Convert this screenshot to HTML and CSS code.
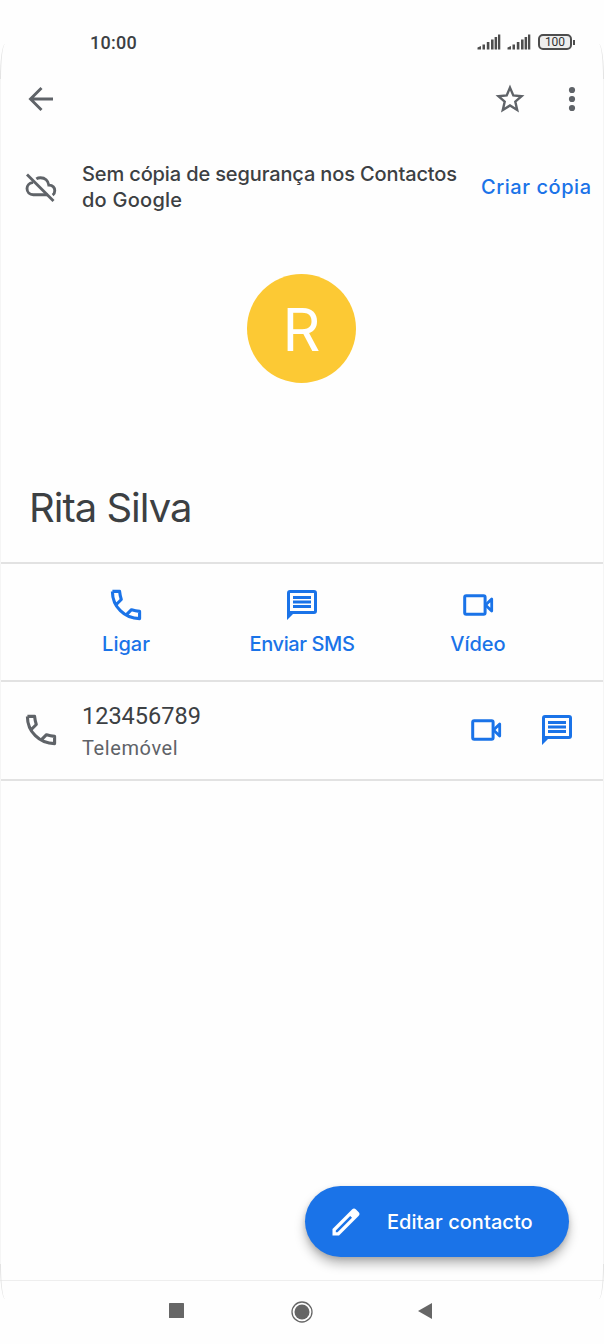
FILE: index.html
```
<!DOCTYPE html>
<html lang="pt">
<head>
<meta charset="utf-8">
<title>Rita Silva</title>
<link rel="stylesheet" href="styles.css">
</head>
<body>
<svg class="defs" width="0" height="0">
  <symbol id="phone" viewBox="0 0 32 32"><path d="M2.400 2.400h7.200c.4 4 .8 5.300 1.700 8.100L6.800 15M2.400 2.400C2.400 17.500 14.500 29.600 29.600 29.600v-7.200c-4-.4-5.300-.8-8.100-1.700L17 25.200" fill="none" stroke="currentColor" stroke-width="3.100" stroke-linejoin="round"/></symbol>
  <symbol id="message" viewBox="0 0 32 32"><path d="M1 31V4q0-3 3-3h24q3 0 3 3v18q0 3-3 3H7zM4 4v18h24V4z" fill="currentColor" fill-rule="evenodd"/><path d="M7 8.500h18M7 13h18M7 17.500h18" stroke="currentColor" stroke-width="2.900"/></symbol>
  <symbol id="video" viewBox="0 0 32 32"><rect x="2.700" y="6.800" width="20.400" height="18.400" rx="1.500" fill="none" stroke="currentColor" stroke-width="3"/><path d="M23.500 16l6.200-6v12z" fill="none" stroke="currentColor" stroke-width="2.800" stroke-linejoin="round"/></symbol>
  <symbol id="signal" viewBox="0 0 24 18"><path d="M.5 14.500L4 13v3.500H.5zM5.500 11.500H8v5H5.500zM9.800 9h2.600v7.500H9.800zM14 6.500h2.600v10H14zM17.600 4h2.500v12.500h-2.500zM21 1.500h2.300v15H21z" fill="currentColor"/></symbol>
</svg>
<main class="screen">
  <i class="edge edge-top"></i><i class="edge edge-bottom"></i>
  <header class="status">
    <time>10:00</time>
    <div class="status-icons">
      <svg class="signal"><use href="#signal"/></svg>
      <svg class="signal"><use href="#signal"/></svg>
      <span class="battery">100</span>
    </div>
  </header>
  <nav class="toolbar">
    <svg class="back" viewBox="0 0 26 26"><path d="M25 13H3M13.500 2L2.500 13l11 11" fill="none" stroke="currentColor" stroke-width="2.900"/></svg>
    <svg class="star" viewBox="0 0 30 30"><path d="M15 3.600l3.300 7.800 8.300.8-6.300 5.500 1.900 8.200-7.200-4.400-7.200 4.400 1.900-8.200-6.300-5.500 8.300-.8z" fill="none" stroke="currentColor" stroke-width="2.400"/></svg>
    <svg class="more" viewBox="0 0 8 26"><circle cx="4" cy="4" r="3.100"/><circle cx="4" cy="13" r="3.100"/><circle cx="4" cy="22" r="3.100"/></svg>
  </nav>
  <section class="backup">
    <svg class="cloud" viewBox="0 0 34 34"><path d="M11.800 7.700C13 6.900 14.500 6.500 16.200 6.500c4.600 0 8 3.200 8.600 7.700 3.800.2 6.200 2.300 6.200 5.800 0 2.100-.8 3.600-2.200 4.600M8.500 11.600h-.8c-3.300.4-5.600 3-5.600 6.200 0 3.700 2.700 6.400 6.500 6.400h15" transform="translate(1 1.500) scale(.96)" fill="none" stroke="currentColor" stroke-width="3"/><path d="M3 4.500l26.500 26.500" stroke="currentColor" stroke-width="2.900"/></svg>
    <p><span class="line-one">Sem cópia de segurança nos Contactos</span><br><span class="line-two">do Google</span></p>
    <a class="create">Criar cópia</a>
  </section>
  <section class="profile">
    <div class="avatar">R</div>
    <h1>Rita Silva</h1>
  </section>
  <section class="actions">
    <a><svg class="icon"><use href="#phone"/></svg><span class="call-label">Ligar</span></a>
    <a><svg class="icon"><use href="#message"/></svg><span class="sms-label">Enviar SMS</span></a>
    <a><svg class="icon"><use href="#video"/></svg><span class="video-label">Vídeo</span></a>
  </section>
  <section class="number">
    <svg class="icon"><use href="#phone"/></svg>
    <div class="details"><div class="digits">123456789</div><div class="kind">Telemóvel</div></div>
    <svg class="icon blue"><use href="#video"/></svg>
    <svg class="icon blue"><use href="#message"/></svg>
  </section>
  <section class="space">
    <button class="edit"><svg viewBox="0 0 32 32"><path d="M2.500 29.500v-6.500L22 3.500q2-2 4 0l2.500 2.500q2 2 0 4L9 29.500zM5.800 24.500v1.700h1.700L22 11.800 20.200 10z" fill="currentColor" fill-rule="evenodd"/></svg><span>Editar contacto</span></button>
  </section>
  <footer class="system">
    <svg class="recent" viewBox="0 0 14 14"><rect width="14" height="14" rx=".5"/></svg>
    <svg class="home" viewBox="0 0 22 22"><circle cx="11" cy="11" r="10" fill="none" stroke="currentColor" stroke-width="1.300"/><circle cx="11" cy="11" r="7.500"/></svg>
    <svg class="previous" viewBox="0 0 14 16"><path d="M0 8L14 0v16z"/></svg>
  </footer>
</main>
</body>
</html>
```
FILE: styles.css
```
* { box-sizing: border-box; }
body { margin: 0; background: #fefefe; color: #3c4043; font-family: Inter, sans-serif; }
svg { display: block; flex: none; fill: currentColor; }
.defs { position: absolute; }
.screen { position: relative; width: 604px; height: 1344px; display: flex; flex-direction: column; overflow: hidden; }
.screen::before { content: ""; position: absolute; inset: 76px 0 78px; border: solid #f5f5f5; border-width: 0 1px; pointer-events: none; }
.edge { position: absolute; left: 0; width: 604px; height: 35px; border: solid #e3e3e3; border-width: 0 1px; pointer-events: none; }
.edge-top { top: 44px; border-radius: 5px 5px 0 0 / 35px 35px 0 0; }
.edge-bottom { top: 1264px; border-radius: 0 0 5px 5px / 0 0 35px 35px; }
.status { height: 66px; display: flex; justify-content: space-between; padding: 32px 32px 0 90px; }
.status time { font: 500 18px/22px Roboto, sans-serif; letter-spacing: .25px; }
.status-icons { display: flex; gap: 6px; }
.signal { width: 24px; height: 18px; margin-top: 1px; color: #4d4d4d; }
.battery { position: relative; width: 34px; height: 16px; margin: 2px 0 0 1px; border: 2px solid #4d4d4d; border-radius: 5px; background: #eee; font: 400 12px/13px Roboto, sans-serif; text-align: center; color: #333; }
.battery::after { content: ""; position: absolute; right: -5px; top: 4px; width: 2px; height: 5px; background: #4d4d4d; }
.toolbar { height: 66px; display: flex; align-items: center; padding: 0 28px 0 28px; color: #5f6368; }
.back { width: 26px; height: 26px; }
.star { width: 30px; height: 30px; margin-left: auto; }
.more { width: 8px; height: 26px; margin-left: 43px; }
.backup { height: 110px; display: flex; align-items: center; padding: 0 11px 0 24px; }
.cloud { width: 34px; height: 34px; color: #5f6368; }
.backup p { width: 399px; margin: 0 0 1px 24px; font-size: 20px; line-height: 26px; font-weight: 500; white-space: nowrap; }
.line-one { letter-spacing: -.13px; }
.line-two { letter-spacing: .25px; }
.create { color: #1a73e8; font-size: 20px; font-weight: 500; letter-spacing: .55px; white-space: nowrap; }
.profile { height: 322px; padding: 32px 30px 0; border-bottom: 2px solid #e2e2e2; }
.avatar { width: 109px; height: 109px; margin: 0 0 0 217px; border-radius: 50%; background: #fcc934; color: white; font-size: 59px; line-height: 111px; text-align: center; }
h1 { margin: 100px 0 0 -1px; font-size: 40px; line-height: 50px; font-weight: 400; letter-spacing: -1px; white-space: nowrap; }
.actions { height: 118px; padding: 25px 38px 0; display: grid; grid-template-columns: repeat(3, 1fr); border-bottom: 2px solid #e2e2e2; color: #1a73e8; }
.actions a { display: flex; flex-direction: column; align-items: center; gap: 10px; font-size: 20px; line-height: 26px; font-weight: 500; }
.sms-label { letter-spacing: -.4px; }
.icon { width: 32px; height: 32px; }
.number { height: 99px; display: flex; align-items: center; padding: 0 31px 2px 25px; border-bottom: 2px solid #e2e2e2; color: #5f6368; gap: 39px; }
.details { margin: 5px auto 0 -14px; font-family: Roboto, sans-serif; }
.digits { font-size: 23.500px; line-height: 32px; color: #3c4043; }
.kind { font-size: 20px; line-height: 32px; letter-spacing: .6px; }
.blue { color: #1a73e8; }
.space { height: 500px; display: flex; justify-content: flex-end; align-items: flex-end; padding: 0 35px 23px; border-bottom: 1px solid #eee; }
.edit { width: 264px; height: 71px; display: flex; align-items: center; gap: 25px; padding: 0 26px 0 25px; border: 0; border-radius: 36px; background: #1a73e8; color: white; font: 500 20px/26px Inter, sans-serif; box-shadow: 0 7px 11px #0004, 0 2px 5px #0002; white-space: nowrap; letter-spacing: .05px; }
.edit svg { width: 32px; height: 32px; }
.system { height: 63px; display: grid; grid-template-columns: 125px 125px 125px; justify-content: center; padding: 19px 1px 0 0; justify-items: center; color: #666; }
.recent { width: 15px; height: 15px; margin-top: 3px; }
.home { width: 22px; height: 22px; margin-top: 1px; }
.previous { width: 14px; height: 16px; margin: 3px 3px 0 0; }
```
